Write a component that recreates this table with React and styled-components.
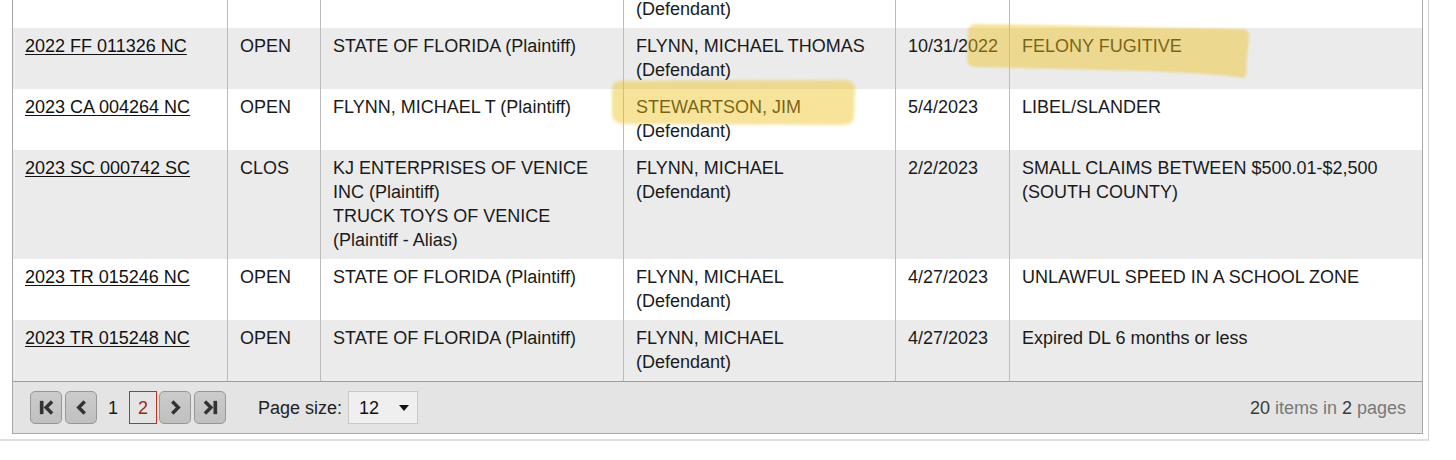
import React from "react"
import styled, { createGlobalStyle } from "styled-components"

const GlobalStyle = createGlobalStyle`
  html, body {
    margin: 0;
    padding: 0;
    background: #fff;
    overflow: hidden;
  }
  body {
    font-family: "Liberation Sans", Arial, Helvetica, sans-serif;
  }
`

const Frame = styled.div`
  width: 1429px;
  box-sizing: border-box;
  margin-top: -34px;
  padding: 0 5px 5px 12px;
  border-right: 1px solid #cdcdcd;
  border-bottom: 2px solid #e0e0e0;
`

const Grid = styled.div`
  border: 1px solid #a8a8a8;
  background: #fff;
  font-size: 18px;
  line-height: 24px;
  color: #1a1a1a;
`

const Row = styled.div`
  position: relative;
  display: grid;
  grid-template-columns: 214px 93px 303px 272px 114px 1fr;
  background: ${({ $alt }) => ($alt ? "#ebebeb" : "#fff")};
`

const Cell = styled.div`
  padding: 6px 12px 7px;
  & + & {
    border-left: 1px solid #bcbcbc;
  }
`

const CaseLink = styled.a`
  color: #111;
  text-decoration: underline;
  text-underline-offset: 2px;
  cursor: pointer;
`

const Marker = styled.svg`
  position: absolute;
  left: ${({ $left }) => $left}px;
  top: ${({ $top }) => $top}px;
  overflow: visible;
  pointer-events: none;
`

const Pager = styled.div`
  display: flex;
  align-items: center;
  height: 52px;
  box-sizing: border-box;
  padding: 0 16px 0 17px;
  background: #e4e4e4;
  border-top: 1px solid #9d9d9d;
  font-size: 18px;
  color: #222;
`

const NavButton = styled.button`
  display: flex;
  align-items: center;
  justify-content: center;
  width: 32px;
  height: 33px;
  margin: 0 ${({ $gap }) => $gap}px 0 0;
  padding: 0;
  box-sizing: border-box;
  background: linear-gradient(#cbcbcb, #c0c0c0);
  border: 1px solid #979797;
  border-radius: 5px;
  color: #333;
  cursor: pointer;
`

const PageNumber = styled.span`
  display: flex;
  align-items: center;
  justify-content: center;
  box-sizing: border-box;
  width: ${({ $current }) => ($current ? "28px" : "32px")};
  height: 33px;
  margin-right: ${({ $current }) => ($current ? "2px" : "0")};
  border: ${({ $current }) => ($current ? "1px solid #c0301e" : "none")};
  color: ${({ $current }) => ($current ? "#9c2814" : "#1a1a1a")};
`

const SizeLabel = styled.span`
  margin: 0 6px 0 32px;
  color: #222;
`

const SizeSelect = styled.div`
  display: flex;
  align-items: center;
  justify-content: space-between;
  width: 70px;
  height: 33px;
  box-sizing: border-box;
  padding: 0 8px 0 10px;
  background: #efefef;
  border: 1px solid #c8c8c8;
  color: #111;
`

const Caret = styled.span`
  width: 0;
  height: 0;
  border-left: 5px solid transparent;
  border-right: 5px solid transparent;
  border-top: 6px solid #111;
`

const Summary = styled.div`
  margin-left: auto;
  color: #787878;
`

const Count = styled.span`
  color: #3a3a3a;
`

const rows = [
  {
    caseNo: "",
    status: "",
    plaintiff: [""],
    defendant: ["", "(Defendant)"],
    date: "",
    description: [""],
  },
  {
    caseNo: "2022 FF 011326 NC",
    status: "OPEN",
    plaintiff: ["STATE OF FLORIDA (Plaintiff)"],
    defendant: ["FLYNN, MICHAEL THOMAS", "(Defendant)"],
    date: "10/31/2022",
    description: ["FELONY FUGITIVE"],
    marker: "felony",
  },
  {
    caseNo: "2023 CA 004264 NC",
    status: "OPEN",
    plaintiff: ["FLYNN, MICHAEL T (Plaintiff)"],
    defendant: ["STEWARTSON, JIM", "(Defendant)"],
    date: "5/4/2023",
    description: ["LIBEL/SLANDER"],
    marker: "defendant",
  },
  {
    caseNo: "2023 SC 000742 SC",
    status: "CLOS",
    plaintiff: [
      "KJ ENTERPRISES OF VENICE",
      "INC (Plaintiff)",
      "TRUCK TOYS OF VENICE",
      "(Plaintiff - Alias)",
    ],
    defendant: ["FLYNN, MICHAEL", "(Defendant)"],
    date: "2/2/2023",
    description: ["SMALL CLAIMS BETWEEN $500.01-$2,500", "(SOUTH COUNTY)"],
  },
  {
    caseNo: "2023 TR 015246 NC",
    status: "OPEN",
    plaintiff: ["STATE OF FLORIDA (Plaintiff)"],
    defendant: ["FLYNN, MICHAEL", "(Defendant)"],
    date: "4/27/2023",
    description: ["UNLAWFUL SPEED IN A SCHOOL ZONE"],
  },
  {
    caseNo: "2023 TR 015248 NC",
    status: "OPEN",
    plaintiff: ["STATE OF FLORIDA (Plaintiff)"],
    defendant: ["FLYNN, MICHAEL", "(Defendant)"],
    date: "4/27/2023",
    description: ["Expired DL 6 months or less"],
  },
]

const ink = "rgba(236, 192, 30, 0.44)"

// highlighter strokes drawn over the screenshot
const FelonyMarker = () => (
  <Marker $left={949} $top={-8} width="292" height="64" viewBox="0 0 292 64">
    <defs>
      <filter id="soft1" x="-5%" y="-20%" width="110%" height="140%">
        <feGaussianBlur stdDeviation="1.2" />
      </filter>
    </defs>
    <path
      d="M13 4 C90 5 200 8 278 9 C285 9 288 12 287 18 L285 38 C284 48 286 56 281 58 C260 54 200 51 138 50 L14 47 C7 47 5 43 5 36 L6 12 C6 7 9 4 13 4 Z"
      fill={ink}
      filter="url(#soft1)"
    />
  </Marker>
)

const DefendantMarker = () => (
  <Marker $left={595} $top={-12} width="250" height="52" viewBox="0 0 250 52">
    <defs>
      <filter id="soft2" x="-5%" y="-20%" width="110%" height="140%">
        <feGaussianBlur stdDeviation="1.4" />
      </filter>
    </defs>
    <path
      d="M14 4 L236 3 C244 3 247 7 247 14 L246 38 C246 45 242 48 235 48 L16 47 C8 47 4 43 4 36 L4 14 C4 7 7 4 14 4 Z"
      fill={ink}
      filter="url(#soft2)"
    />
  </Marker>
)

const Lines = ({ lines }) => lines.map((line, i) => <div key={i}>{line || "\u00a0"}</div>)

const FirstIcon = () => (
  <svg width="15" height="15" viewBox="0 0 14 14">
    <rect x="0.8" y="0.8" width="3.4" height="12.4" fill="currentColor" />
    <path d="M12.2 1.4 L6.6 7 L12.2 12.6" fill="none" stroke="currentColor" strokeWidth="3.2" />
  </svg>
)

const PrevIcon = () => (
  <svg width="15" height="15" viewBox="0 0 14 14">
    <path d="M10 1.4 L4.4 7 L10 12.6" fill="none" stroke="currentColor" strokeWidth="3.2" />
  </svg>
)

const NextIcon = () => (
  <svg width="15" height="15" viewBox="0 0 14 14">
    <path d="M4 1.4 L9.6 7 L4 12.6" fill="none" stroke="currentColor" strokeWidth="3.2" />
  </svg>
)

const LastIcon = () => (
  <svg width="15" height="15" viewBox="0 0 14 14">
    <path d="M1.8 1.4 L7.4 7 L1.8 12.6" fill="none" stroke="currentColor" strokeWidth="3.2" />
    <rect x="9.8" y="0.8" width="3.4" height="12.4" fill="currentColor" />
  </svg>
)

const App = () => (
  <>
    <GlobalStyle />
    <Frame>
      <Grid>
        {rows.map((row, i) => (
          <Row key={i} $alt={i % 2 === 1}>
            <Cell>{row.caseNo && <CaseLink>{row.caseNo}</CaseLink>}</Cell>
            <Cell>{row.status}</Cell>
            <Cell>
              <Lines lines={row.plaintiff} />
            </Cell>
            <Cell>
              <Lines lines={row.defendant} />
            </Cell>
            <Cell>{row.date}</Cell>
            <Cell>
              <Lines lines={row.description} />
            </Cell>
            {row.marker === "felony" && <FelonyMarker />}
            {row.marker === "defendant" && <DefendantMarker />}
          </Row>
        ))}
        <Pager>
          <NavButton $gap={3} title="Go to the first page">
            <FirstIcon />
          </NavButton>
          <NavButton $gap={0} title="Go to the previous page">
            <PrevIcon />
          </NavButton>
          <PageNumber>1</PageNumber>
          <PageNumber $current>2</PageNumber>
          <NavButton $gap={3} title="Go to the next page">
            <NextIcon />
          </NavButton>
          <NavButton $gap={0} title="Go to the last page">
            <LastIcon />
          </NavButton>
          <SizeLabel>Page size:</SizeLabel>
          <SizeSelect>
            <span>12</span>
            <Caret />
          </SizeSelect>
          <Summary>
            <Count>20</Count> items in <Count>2</Count> pages
          </Summary>
        </Pager>
      </Grid>
    </Frame>
  </>
)

export default App
